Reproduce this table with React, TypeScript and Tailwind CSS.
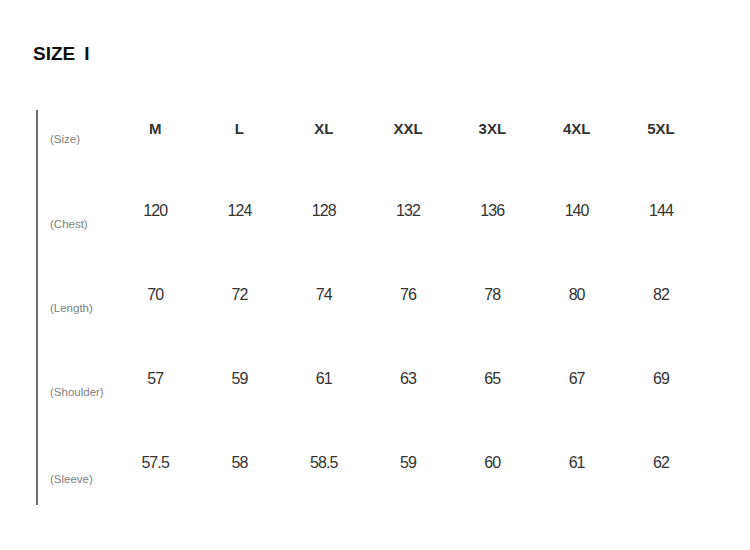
const SIZES = ['M', 'L', 'XL', 'XXL', '3XL', '4XL', '5XL']

const ROWS: { label: string; values: string[] }[] = [
  { label: '(Chest)', values: ['120', '124', '128', '132', '136', '140', '144'] },
  { label: '(Length)', values: ['70', '72', '74', '76', '78', '80', '82'] },
  { label: '(Shoulder)', values: ['57', '59', '61', '63', '65', '67', '69'] },
  { label: '(Sleeve)', values: ['57.5', '58', '58.5', '59', '60', '61', '62'] },
]

export default function App() {
  return (
    <div className="w-[750px] h-[550px] bg-white font-['Liberation_Sans',Arial,sans-serif] pl-[33px] pt-[44px]">
      <h1 className="text-[19px] leading-[19px] font-bold text-[#111]">
        SIZE<span className="ml-[9px]">I</span>
      </h1>

      <div className="mt-[47px] ml-[3px] border-l-2 border-[#6b6b6b] h-[395px] flex flex-col">
        {/* header row */}
        <div className="flex h-[84px]">
          <div className="w-[75px] pl-[12px] pt-[24px] text-[11.5px] leading-[11px] text-[#808080]">(Size)</div>
          {SIZES.map((s) => (
            <div key={s} className="w-[84.3px] pt-[11px] text-center text-[15px] leading-[15px] font-bold text-[#333]">
              {s}
            </div>
          ))}
        </div>

        {ROWS.map((row, i) => {
          const last = i === ROWS.length - 1
          return (
            <div key={row.label} className={last ? 'flex flex-1' : 'flex h-[84px]'}>
              <div
                className={
                  last
                    ? 'w-[75px] pl-[12px] pt-[28px] text-[11.5px] leading-[11px] text-[#808080]'
                    : 'w-[75px] pl-[12px] pt-[25px] text-[11.5px] leading-[11px] text-[#808080]'
                }
              >
                {row.label}
              </div>
              {row.values.map((v, j) => (
                <div key={j} className="w-[84.3px] pt-[9px] text-center text-[16px] leading-[16px] tracking-[-0.9px] text-[#333]">
                  {v}
                </div>
              ))}
            </div>
          )
        })}
      </div>
    </div>
  )
}
